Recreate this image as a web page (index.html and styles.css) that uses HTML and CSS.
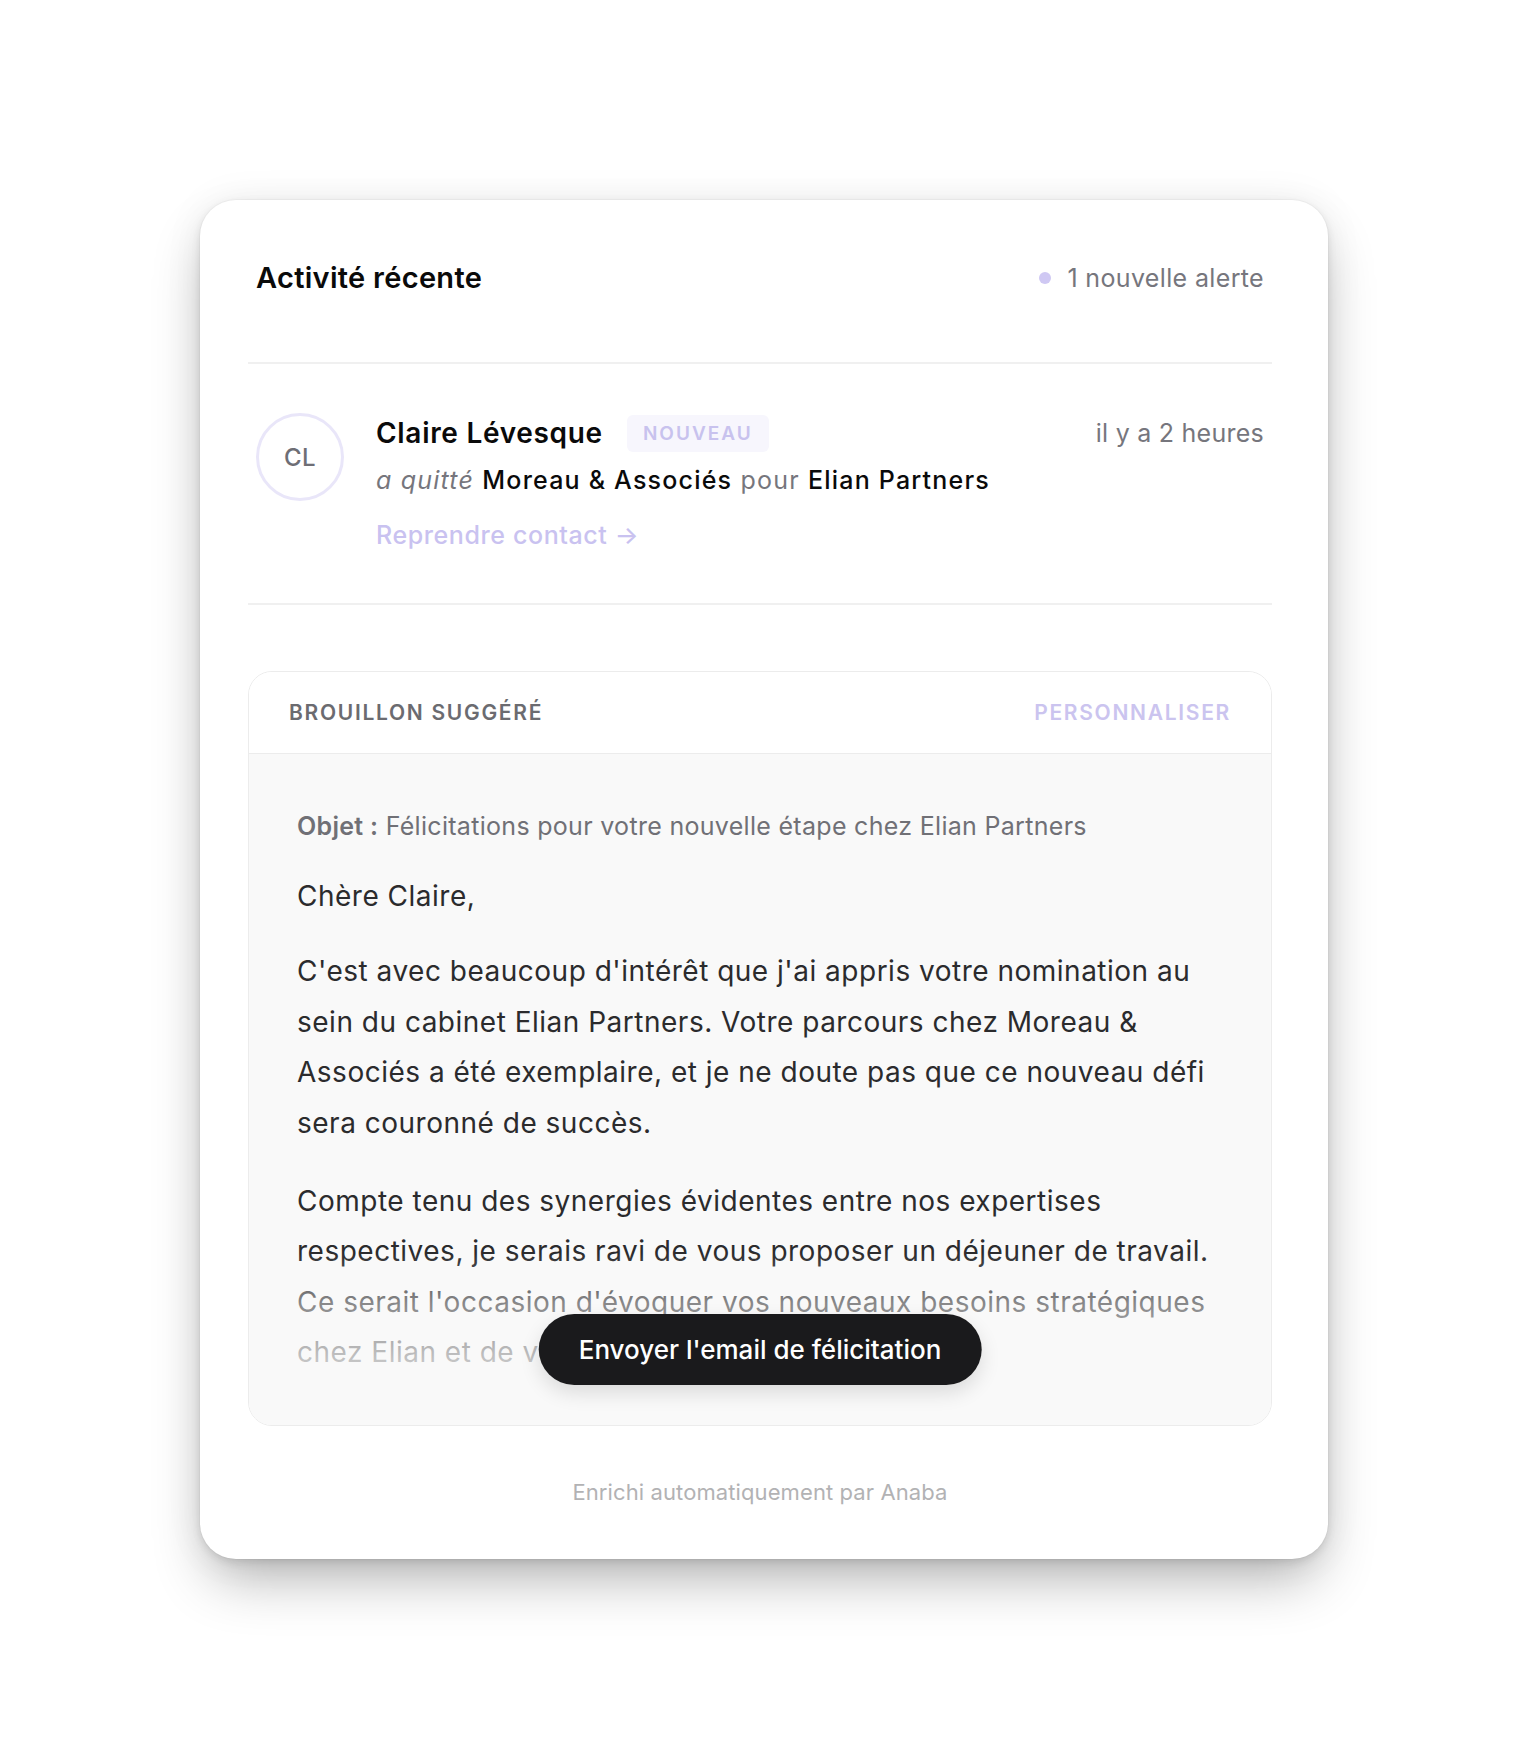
FILE: index.html
```html
<!DOCTYPE html>
<html lang="fr">
<head>
<meta charset="utf-8">
<title>Activité récente</title>
<link rel="stylesheet" href="styles.css">
</head>
<body>
<main class="page">
  <section class="card">
    <header class="card-header">
      <h1 class="title">Activité récente</h1>
      <div class="alert"><span class="dot"></span>1 nouvelle alerte</div>
    </header>

    <article class="activity">
      <div class="avatar">CL</div>
      <div class="activity-main">
        <div class="name-line">
          <span class="name">Claire Lévesque</span>
          <span class="badge">NOUVEAU</span>
        </div>
        <p class="detail"><em>a quitté</em> <strong>Moreau &amp; Associés</strong> pour <strong>Elian Partners</strong></p>
        <a class="link" href="#">Reprendre contact →</a>
      </div>
      <div class="time">il y a 2 heures</div>
    </article>

    <section class="draft">
      <div class="draft-header">
        <span class="draft-label">BROUILLON SUGGÉRÉ</span>
        <span class="draft-action">PERSONNALISER</span>
      </div>
      <div class="draft-body">
        <div class="draft-text">
          <p class="subject"><strong>Objet :</strong> Félicitations pour votre nouvelle étape chez Elian Partners</p>
          <p class="para">Chère Claire,</p>
          <p class="para">C'est avec beaucoup d'intérêt que j'ai appris votre nomination au sein du cabinet Elian Partners. Votre parcours chez Moreau &amp; Associés a été exemplaire, et je ne doute pas que ce nouveau défi sera couronné de succès.</p>
          <p class="para">Compte tenu des synergies évidentes entre nos expertises respectives, je serais ravi de vous proposer un déjeuner de travail. Ce serait l'occasion d'évoquer vos nouveaux besoins stratégiques chez Elian et de vous rencontrer.</p>
        </div>
        <div class="fade"></div>
        <button class="send" type="button">Envoyer l'email de félicitation</button>
      </div>
    </section>

    <footer class="card-footer">Enrichi automatiquement par Anaba</footer>
  </section>
</main>
</body>
</html>
```

FILE: styles.css
```css
* { box-sizing: border-box; }

html, body {
  margin: 0;
  padding: 0;
  background: #ffffff;
}

body {
  font-family: Inter, "Noto Sans", "Liberation Sans", sans-serif;
  color: #111111;
}

.page {
  padding: 200px 0 200px;
}

.card {
  width: 1128px;
  margin: 0 auto;
  background: #ffffff;
  border-radius: 36px;
  padding: 48px 56px 52px 48px;
  box-shadow:
    0 0 0 1px rgba(0, 0, 0, 0.025),
    0 3px 8px rgba(0, 0, 0, 0.10),
    0 28px 56px -10px rgba(0, 0, 0, 0.30),
    0 0 40px rgba(0, 0, 0, 0.06);
}

/* Header */
.card-header {
  display: flex;
  align-items: center;
  justify-content: space-between;
  padding: 13px 8px 67px;
  border-bottom: 2px solid #f0f0f0;
}

.title {
  margin: 0;
  font-size: 29px;
  line-height: 34px;
  font-weight: 600;
  letter-spacing: 0.3px;
  color: #0a0a0a;
}

.alert {
  display: flex;
  align-items: center;
  gap: 16px;
  font-size: 25px;
  line-height: 34px;
  letter-spacing: 0.35px;
  color: #76767d;
}

.dot {
  width: 12px;
  height: 12px;
  border-radius: 50%;
  background: #cfc8f3;
}

/* Activity row */
.activity {
  display: flex;
  align-items: flex-start;
  gap: 32px;
  padding: 49px 8px 50px;
  border-bottom: 2px solid #f0f0f0;
}

.avatar {
  flex: none;
  width: 88px;
  height: 88px;
  border-radius: 50%;
  border: 3px solid #e9e6f9;
  display: flex;
  align-items: center;
  justify-content: center;
  font-size: 24px;
  font-weight: 500;
  letter-spacing: 0.5px;
  color: #6e6e75;
}

.activity-main {
  flex: 1;
  min-width: 0;
}

.name-line {
  display: flex;
  align-items: center;
  gap: 24px;
  height: 40px;
}

.name {
  font-size: 28px;
  line-height: 40px;
  font-weight: 600;
  letter-spacing: 0.7px;
  color: #0a0a0a;
}

.badge {
  height: 37px;
  line-height: 37px;
  padding: 0 16px;
  border-radius: 6px;
  background: #f7f6fd;
  color: #c8c2ee;
  font-size: 19px;
  font-weight: 600;
  letter-spacing: 2px;
}

.detail {
  margin: 9px 0 0;
  font-size: 25px;
  line-height: 36px;
  letter-spacing: 1.2px;
  color: #76767d;
}

.detail em {
  font-style: italic;
}

.detail strong {
  font-weight: 500;
  color: #0a0a0a;
}

.link {
  display: inline-block;
  margin-top: 19px;
  font-size: 25px;
  line-height: 36px;
  font-weight: 500;
  letter-spacing: 0.6px;
  color: #c9c2f0;
  text-decoration: none;
}

.time {
  flex: none;
  font-size: 25px;
  line-height: 40px;
  letter-spacing: 0.25px;
  color: #76767d;
}

/* Draft */
.draft {
  margin-top: 66px;
  border: 1px solid #ececec;
  border-radius: 24px;
  overflow: hidden;
}

.draft-header {
  display: flex;
  justify-content: space-between;
  align-items: center;
  padding: 27px 40px 26px;
  border-bottom: 1px solid #ececec;
  background: #ffffff;
  font-size: 21px;
  line-height: 28px;
  font-weight: 600;
  letter-spacing: 1.7px;
}

.draft-label { color: #6b6b70; }
.draft-action { color: #cbc4ef; }

.draft-body {
  position: relative;
  background: #f9f9f9;
  padding: 54px 48px 47px;
}

.draft-text {
  height: 570px;
  overflow: hidden;
}

.subject {
  margin: 0;
  font-size: 25px;
  line-height: 36px;
  letter-spacing: 0.3px;
  color: #707076;
}

.subject strong {
  font-weight: 600;
}

.para {
  margin: 27px 0 0;
  font-size: 28px;
  line-height: 50.4px;
  letter-spacing: 0.5px;
  color: #2b2b2d;
}

.para + .para {
  margin-top: 25px;
}

.para + .para + .para {
  margin-top: 28px;
}

.fade {
  position: absolute;
  left: 0;
  right: 0;
  bottom: 0;
  height: 172px;
  background: linear-gradient(
    to bottom,
    rgba(249, 249, 249, 0) 0%,
    rgba(249, 249, 249, 0.45) 29%,
    rgba(249, 249, 249, 0.7) 58%,
    rgba(249, 249, 249, 0.92) 85%,
    #f9f9f9 100%
  );
  pointer-events: none;
}

.send {
  position: absolute;
  left: 50%;
  bottom: 40px;
  transform: translateX(-50%);
  height: 71px;
  padding: 0 40px;
  border: none;
  border-radius: 999px;
  background: #1a1a1c;
  color: #ffffff;
  font-family: inherit;
  font-size: 26px;
  font-weight: 500;
  white-space: nowrap;
  box-shadow: 0 8px 20px rgba(0, 0, 0, 0.12);
}

/* Footer */
.card-footer {
  margin-top: 51px;
  text-align: center;
  font-size: 22px;
  line-height: 30px;
  letter-spacing: 0.1px;
  color: #b2b2b4;
}
```
